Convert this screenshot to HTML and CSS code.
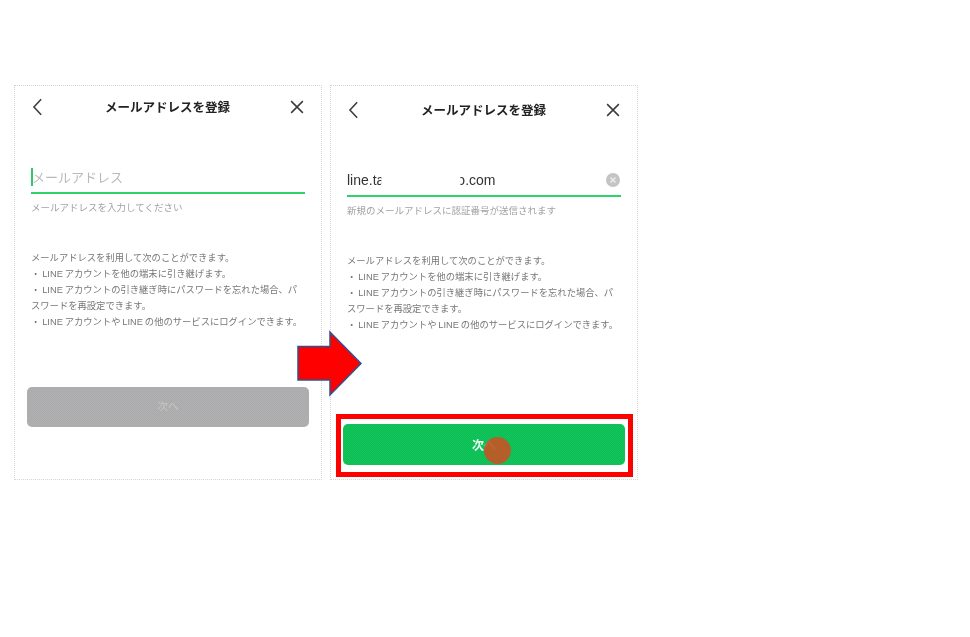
FILE: index.html
```html
<!DOCTYPE html>
<html lang="ja">
  <head>
    <meta charset="UTF-8" />
    <title>メールアドレスを登録</title>
    <link rel="stylesheet" href="styles.css">
  </head>
  <body>
    <div class="stage">
      <!-- before -->
      <section class="phone">
        <header class="bar">
          <svg class="icon" viewBox="0 0 20 20"><path d="M13.5 1.5 L5.5 10 L13.5 18.5" /></svg>
          <h1>メールアドレスを登録</h1>
          <svg class="icon" viewBox="0 0 20 20"><path d="M3.5 3.5 L16.5 16.5 M16.5 3.5 L3.5 16.5" /></svg>
        </header>
        <div class="field">
          <span class="caret"></span>
          <span class="placeholder">メールアドレス</span>
        </div>
        <p class="hint">メールアドレスを入力してください</p>
        <div class="info">
          <p>メールアドレスを利用して次のことができます。</p>
          <p>・&thinsp;LINE&thinsp;アカウントを他の端末に引き継げます。</p>
          <p>・&thinsp;LINE&thinsp;アカウントの引き継ぎ時にパスワードを忘れた場合、パスワードを再設定できます。</p>
          <p>・&thinsp;LINE&thinsp;アカウントや&thinsp;LINE&thinsp;の他のサービスにログインできます。</p>
        </div>
        <button class="next next-off" type="button">次へ</button>
      </section>

      <!-- after -->
      <section class="phone phone-after">
        <header class="bar">
          <svg class="icon" viewBox="0 0 20 20"><path d="M13.5 1.5 L5.5 10 L13.5 18.5" /></svg>
          <h1>メールアドレスを登録</h1>
          <svg class="icon" viewBox="0 0 20 20"><path d="M3.5 3.5 L16.5 16.5 M16.5 3.5 L3.5 16.5" /></svg>
        </header>
        <div class="field">
          <span class="value value-head">line.ta</span>
          <span class="hidden-part"></span>
          <span class="value value-tail">o.com</span>
          <svg class="clear" viewBox="0 0 14 14">
            <circle cx="7" cy="7" r="7" />
            <path d="M4.5 4.5 L9.5 9.5 M9.5 4.5 L4.5 9.5" />
          </svg>
        </div>
        <p class="hint">新規のメールアドレスに認証番号が送信されます</p>
        <div class="info">
          <p>メールアドレスを利用して次のことができます。</p>
          <p>・&thinsp;LINE&thinsp;アカウントを他の端末に引き継げます。</p>
          <p>・&thinsp;LINE&thinsp;アカウントの引き継ぎ時にパスワードを忘れた場合、パスワードを再設定できます。</p>
          <p>・&thinsp;LINE&thinsp;アカウントや&thinsp;LINE&thinsp;の他のサービスにログインできます。</p>
        </div>
        <button class="next next-on" type="button">次へ</button>
      </section>

      <!-- annotations on top of the screenshots -->
      <svg class="arrow" viewBox="0 0 66 67"><path d="M1 16.5 H33 V2 L64 33.5 L33 65 V50 H1 Z" /></svg>
      <div class="highlight"></div>
      <div class="tap"></div>
    </div>
  </body>
</html>
```

FILE: styles.css
```css
* {
  box-sizing: border-box;
}

body {
  margin: 0;
  background: #fff;
  font-family: "Liberation Sans", "Noto Sans CJK JP", sans-serif;
}

.stage {
  position: relative;
  display: flex;
  gap: 8px;
  height: 637px;
  padding: 85px 0 0 14px;
}

.phone {
  display: flex;
  flex-direction: column;
  width: 308px;
  height: 395px;
  padding: 9px 16px 0;
  border: 1px dotted #d0d6d2;
  filter: blur(0.45px);
}

.phone-after {
  padding-top: 12px;
}

.bar {
  display: flex;
  justify-content: space-between;
  align-items: center;
  height: 22px;
  margin: 0 -1px 0 -2px;
}

.bar h1 {
  margin: 0;
  font-size: 12.5px;
  font-weight: 700;
  color: #222;
}

.icon {
  width: 18px;
  height: 18px;
  margin-top: 2px;
  fill: none;
  stroke: #3a3a3a;
  stroke-width: 1.7;
}

.field {
  display: flex;
  align-items: center;
  height: 30px;
  margin-top: 47px;
  padding-bottom: 2px;
  border-bottom: 2px solid #2fd26a;
  font-size: 13px;
}

.caret {
  width: 2px;
  height: 18px;
  margin-top: -1px;
  background: #2fc76a;
}

.placeholder {
  margin: -2px 0 0 -1px;
  color: #b9b9b9;
}

.value {
  font-size: 14px;
  color: #333;
  white-space: nowrap;
}

.value-head {
  clip-path: inset(0 3px 0 0);
}

.value-tail {
  clip-path: inset(0 0 0 3px);
}

.hidden-part {
  width: 73px;
}

.clear {
  width: 14px;
  height: 14px;
  margin-left: auto;
  margin-right: 1px;
}

.clear circle {
  fill: #c4c4c4;
}

.clear path {
  fill: none;
  stroke: #efefef;
  stroke-width: 1.4;
}

.hint {
  margin: 7px 0 0;
  font-size: 9.5px;
  line-height: 13px;
  color: #a2a2a2;
}

.info {
  margin-top: 36px;
  padding-right: 2px;
  font-size: 9.3px;
  line-height: 16px;
  color: #777;
}

.info p {
  margin: 0;
}

.next {
  position: absolute;
  left: 12px;
  width: 282px;
  border: 0;
  border-radius: 5px;
  font-family: inherit;
}

.next-off {
  top: 301px;
  height: 40px;
  padding: 0 0 4px;
  font-size: 10.5px;
  color: #c6c6c6;
  background: repeating-conic-gradient(#b4afb4 0 25%, #a8aca8 0 50%) 0 0 / 2px 2px;
}

.next-on {
  top: 338px;
  height: 41px;
  font-size: 12px;
  font-weight: 700;
  color: #eafff1;
  background: repeating-conic-gradient(#0cc858 0 25%, #12bb58 0 50%) 0 0 / 2px 2px;
}

.arrow {
  position: absolute;
  left: 297px;
  top: 330px;
  width: 66px;
  height: 67px;
  fill: #ff0000;
  stroke: #2f528f;
  stroke-width: 1.5;
}

.highlight {
  position: absolute;
  left: 336px;
  top: 414px;
  width: 297px;
  height: 63px;
  border: 5px solid #ff0000;
}

.tap {
  position: absolute;
  left: 484px;
  top: 437px;
  width: 27px;
  height: 27px;
  border-radius: 50%;
  background: rgba(190, 90, 40, 0.95);
}
```
